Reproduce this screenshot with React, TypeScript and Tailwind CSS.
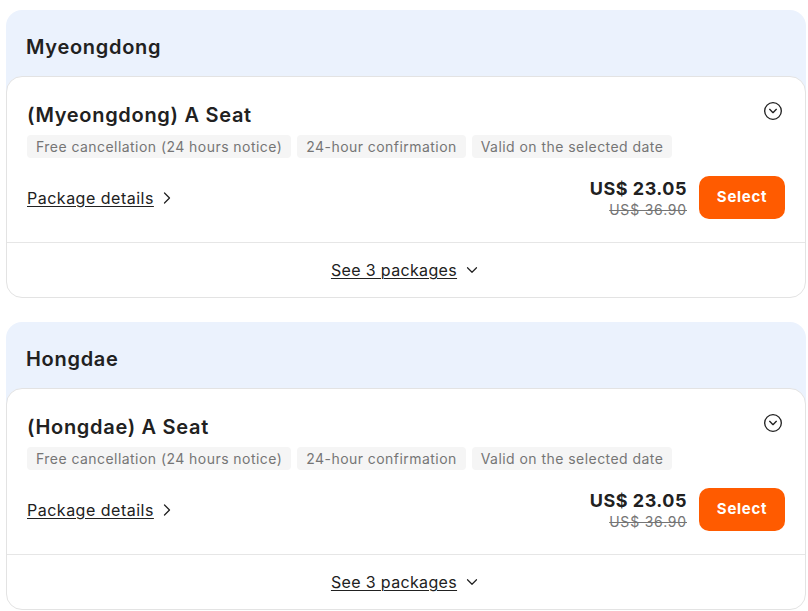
import React from 'react'
import { ChevronRight, ChevronDown, CircleChevronDown } from 'lucide-react'

const tags = ['Free cancellation (24 hours notice)', '24-hour confirmation', 'Valid on the selected date']

const sections = [
  { area: 'Myeongdong', title: '(Myeongdong) A Seat' },
  { area: 'Hongdae', title: '(Hongdae) A Seat' },
]

function Section({ area, title }: { area: string; title: string }) {
  return (
    <div>
      {/* Header */}
      <div className="bg-[#ebf2fd] rounded-t-2xl px-5 pt-6 pb-[32px]">
        <h2 className="text-[20px] leading-[26px] font-semibold tracking-[0.7px] text-[#212121]">{area}</h2>
      </div>

      {/* Card */}
      <div className="relative -mt-4 bg-white border border-[#e3e3e3] rounded-2xl">
        <div className="px-5 pt-6 pb-[23px]">
          <div className="flex items-start justify-between">
            <h3 className="text-[20px] leading-7 font-semibold tracking-[0.7px] text-[#212121]">{title}</h3>
            <CircleChevronDown size={20} strokeWidth={1.6} className="text-[#212121] mr-[2px]" />
          </div>
          <div className="flex gap-1.5 mt-[6px]">
            {tags.map((t) => (
              <span key={t} className="bg-[#f5f5f5] text-[#757575] text-[14px] leading-[23px] tracking-[0.45px] px-[9px] rounded">
                {t}
              </span>
            ))}
          </div>
          <div className="flex items-center justify-between mt-[18px]">
            <a className="flex items-center gap-[3px] text-[16px] tracking-[0.5px] text-[#212121] underline underline-offset-2 decoration-1">
              Package details
              <ChevronRight size={20} strokeWidth={1.5} className="text-[#212121]" />
            </a>
            <div className="flex items-center gap-3">
              <div className="flex flex-col items-end">
                <span className="text-[18px] leading-6 font-bold tracking-[0.5px] text-[#212121]">US$ 23.05</span>
                <span className="text-[14px] leading-[18px] tracking-[0.8px] text-[#757575] line-through">US$ 36.90</span>
              </div>
              <button className="bg-[#ff5b00] text-white font-bold text-[15px] tracking-[0.7px] w-[86px] h-[43px] rounded-[10px]">
                Select
              </button>
            </div>
          </div>
        </div>
        <div className="border-t border-[#e6e6e6] h-[55px] flex items-center justify-center">
          <a className="flex items-center gap-1.5 text-[16px] tracking-[0.35px] text-[#212121] underline underline-offset-2 decoration-1">
            See 3 packages
            <ChevronDown size={18} strokeWidth={1.6} className="text-[#212121]" />
          </a>
        </div>
      </div>
    </div>
  )
}

export default function App() {
  return (
    <div className="min-h-screen bg-white px-[6px] pt-[10px] font-['Inter',sans-serif]" style={{ width: 808 }}>
      <div className="flex flex-col gap-6 w-[800px]">
        {sections.map((s) => (
          <Section key={s.area} {...s} />
        ))}
      </div>
    </div>
  )
}
